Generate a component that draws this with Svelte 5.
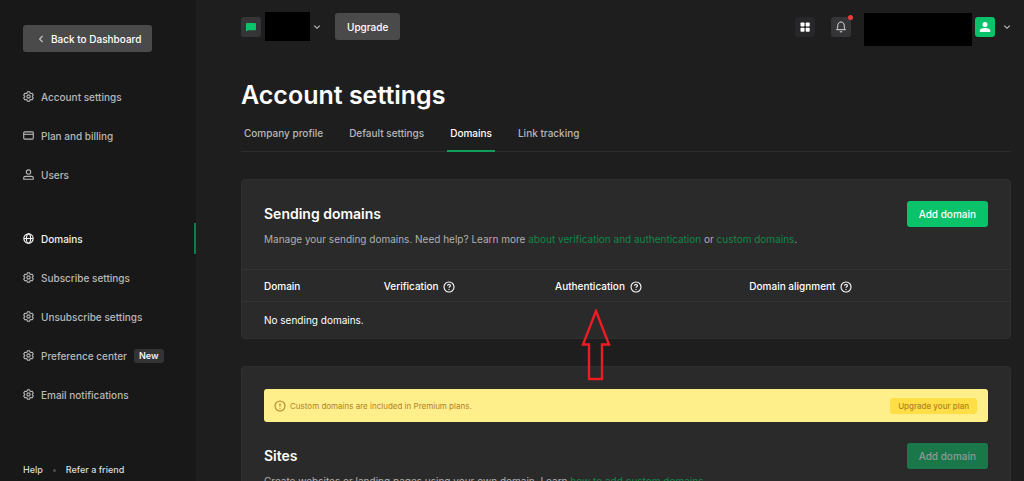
<script lang="ts">

    type NavItem = { label: string; icon: string; active?: boolean; badge?: string };

    const navGroups: NavItem[][] = [
        [
            { label: "Account settings", icon: "gear" },
            { label: "Plan and billing", icon: "card" },
            { label: "Users", icon: "user" },
        ],
        [
            { label: "Domains", icon: "globe", active: true },
            { label: "Subscribe settings", icon: "gear" },
            { label: "Unsubscribe settings", icon: "gear" },
            { label: "Preference center", icon: "gear", badge: "New" },
            { label: "Email notifications", icon: "gear" },
        ],
    ];

    const tabs = ["Company profile", "Default settings", "Domains", "Link tracking"];

    let activeTab = $state("Domains");

</script>

{#snippet chevron()}
    <svg class="chevron" viewBox="0 0 8 8" aria-hidden="true">
        <path d="M1.3 2.7 4 5.3l2.7-2.6" />
    </svg>
{/snippet}

{#snippet help()}
    <svg class="help" viewBox="0 0 12 12" aria-hidden="true">
        <circle cx="6" cy="6" r="5" />
        <path d="M4.6 4.8c0-1.8 2.8-1.8 2.8 0 0 1-1.4 1-1.4 2M6 8.1v.9" />
    </svg>
{/snippet}

{#snippet navIcon(name: string)}
    <svg class="nav-icon" viewBox="0 0 12 12" aria-hidden="true">
        {#if name === "gear"}
            <path d="M4.9.8h2.2l.5 1.4 1 .6 1.5-.3 1.1 1.9-1 1.1v1l1 1.1-1.1 1.9-1.5-.3-1 .6-.5 1.4H4.9l-.5-1.4-1-.6-1.5.3L.8 7.6l1-1.1v-1l-1-1.1 1.1-1.9 1.5.3 1-.6z" stroke-linejoin="round" />
            <circle cx="6" cy="6" r="1.8" />
        {:else if name === "card"}
            <rect x="0.8" y="2" width="10.4" height="8" rx="1" />
            <path d="M.8 4.7h10.4" />
        {:else if name === "user"}
            <circle cx="6" cy="3.3" r="2.4" />
            <path d="M.8 11.2V9.6c0-1 .7-1.6 1.6-1.6h7.2c.9 0 1.6.6 1.6 1.6v1.6z" />
        {:else}
            <circle cx="6" cy="6" r="5.1" />
            <ellipse cx="6" cy="6" rx="2.3" ry="5.1" />
            <path d="M1 6h10" />
        {/if}
    </svg>
{/snippet}

<div class="layout">
    <aside class="sidebar">
        <button class="button back" type="button">
            <svg class="chevron" viewBox="0 0 8 8" aria-hidden="true">
                <path d="M5.6 1 2.6 4l3 3" />
            </svg>
            Back to Dashboard
        </button>

        <nav class="nav" aria-label="Settings">
            {#each navGroups as group}
                <ul class="nav-group">
                    {#each group as item}
                        <li>
                            <a class="nav-item" class:active={item.active} href="#settings">
                                {@render navIcon(item.icon)}
                                {item.label}
                                {#if item.badge}
                                    <span class="badge">{item.badge}</span>
                                {/if}
                            </a>
                        </li>
                    {/each}
                </ul>
            {/each}
        </nav>

        <footer class="sidebar-footer">
            <a href="#help">Help</a>
            <span class="separator"></span>
            <a href="#refer">Refer a friend</a>
        </footer>
    </aside>

    <main class="main">
        <header class="topbar">
            <button class="switcher" type="button" aria-label="Switch account">
                <span class="tile">
                    <svg viewBox="0 0 12 12" aria-hidden="true">
                        <path d="M1.8 2h8.4c.4 0 .8.4.8.8v5.6c0 .4-.4.8-.8.8H3L1 10.6V2.8c0-.4.4-.8.8-.8z" fill="#09c269" />
                    </svg>
                </span>
                <span class="hidden-name"></span>
                {@render chevron()}
            </button>
            <button class="button upgrade" type="button">Upgrade</button>

            <div class="topbar-actions">
                <button class="tile dim" type="button" aria-label="Apps">
                    <svg viewBox="0 0 12 12" fill="#fff" aria-hidden="true">
                        <rect x="1.5" y="1.5" width="4" height="4" rx="0.8" />
                        <rect x="6.7" y="1.5" width="4" height="4" rx="0.8" />
                        <rect x="1.5" y="6.7" width="4" height="4" rx="0.8" />
                        <rect x="6.7" y="6.7" width="4" height="4" rx="0.8" />
                    </svg>
                </button>
                <button class="tile bell" type="button" aria-label="Notifications">
                    <svg viewBox="0 0 12 12" fill="none" stroke="#ddd" aria-hidden="true">
                        <path d="M1.5 8.7C2.5 8 2.8 7 2.8 4.5 2.8 2.5 4 1 6 1s3.2 1.5 3.2 3.5c0 2.5.3 3.5 1.3 4.2z" stroke-linejoin="round" />
                        <path d="M4.8 10.8h2.4" />
                    </svg>
                    <span class="dot"></span>
                </button>
                <button class="profile" type="button" aria-label="Profile">
                    <span class="hidden-profile"></span>
                    <span class="tile avatar">
                        <svg viewBox="0 0 12 12" fill="#fff" aria-hidden="true">
                            <circle cx="6" cy="3.5" r="2.5" />
                            <path d="M.8 11V9.5C.8 7.8 2.5 6.9 6 6.900s5.200.9 5.200 2.600V11z" />
                        </svg>
                    </span>
                    {@render chevron()}
                </button>
            </div>
        </header>

        <h1>Account settings</h1>

        <div class="tabs" role="tablist">
            {#each tabs as tab}
                <button
                    class="tab"
                    class:selected={tab === activeTab}
                    type="button"
                    role="tab"
                    aria-selected={tab === activeTab}
                    onclick={() => (activeTab = tab)}
                >
                    {tab}
                </button>
            {/each}
        </div>

        <section class="card">
            <div class="card-head">
                <div>
                    <h2>Sending domains</h2>
                    <p>
                        Manage your sending domains. Need help? Learn more
                        <a href="#authentication">about verification and authentication</a> or
                        <a href="#custom">custom domains</a>.
                    </p>
                </div>
                <button class="button primary" type="button">Add domain</button>
            </div>
            <table>
                <thead>
                    <tr>
                        <th class="col-domain">Domain</th>
                        <th class="col-verification">Verification {@render help()}</th>
                        <th class="col-authentication">
                            Authentication {@render help()}
                            <svg class="pointer" viewBox="0 0 30 72" aria-hidden="true">
                                <path d="M15 2 28 35.5H21V70H8V35.5H2z" />
                            </svg>
                        </th>
                        <th>Domain alignment {@render help()}</th>
                    </tr>
                </thead>
                <tbody>
                    <tr>
                        <td colspan="4">No sending domains.</td>
                    </tr>
                </tbody>
            </table>
        </section>

        <section class="card">
            <div class="notice">
                <svg class="help" viewBox="0 0 12 12" aria-hidden="true">
                    <circle cx="6" cy="6" r="5" />
                    <path d="M6 3.2v3.3M6 7.7v1.1" />
                </svg>
                <span>Custom domains are included in Premium plans.</span>
                <button class="notice-button" type="button">Upgrade your plan</button>
            </div>
            <div class="card-head">
                <div>
                    <h2>Sites</h2>
                    <p>
                        Create websites or landing pages using your own domain. Learn
                        <a href="#sites">how to add custom domains</a>.
                    </p>
                </div>
                <button class="button primary" type="button" disabled>Add domain</button>
            </div>
        </section>
    </main>
</div>

<style>
    :global(body) {
        background: #1e1e1e;
    }

    .layout {
        display: flex;
        height: 100vh;
        overflow: hidden;
        background: #1e1e1e;
        color: #fff;
        font-family: Inter, "Liberation Sans", sans-serif;
        font-size: 10px;
        line-height: 16px;
    }

    a {
        color: inherit;
        text-decoration: none;
    }

    button {
        padding: 0;
        border: 0;
        background: none;
        color: inherit;
        font: inherit;
        cursor: pointer;
    }

    .button {
        display: flex;
        align-items: center;
        justify-content: center;
        flex: 0 0 auto;
        height: 27px;
        padding: 0 12px;
        border-radius: 3px;
        background: #4a4a4b;
        font-weight: 500;
    }

    .chevron {
        width: 8px;
        height: 8px;
        fill: none;
        stroke: #c8c8c8;
        stroke-width: 1.1;
    }

    .sidebar {
        display: flex;
        flex: 0 0 196px;
        flex-direction: column;
        box-sizing: border-box;
        padding: 25px 0 3px;
        background: #181818;
    }

    .back {
        align-self: flex-start;
        gap: 6px;
        margin-left: 23px;
        padding: 0 11px 0 14px;
    }

    .nav {
        display: flex;
        flex-direction: column;
        gap: 33px;
        margin-top: 29px;
    }

    .nav-group {
        display: flex;
        flex-direction: column;
        gap: 8px;
        margin: 0;
        padding: 0;
        list-style: none;
    }

    .nav-item {
        display: flex;
        align-items: center;
        gap: 7px;
        height: 31px;
        padding-left: 23px;
        border-right: 2px solid transparent;
        color: #b8b8b8;
        font-weight: 500;
    }

    .nav-item.active {
        border-color: #0c7c48;
        color: #f2f2f2;
    }

    .nav-icon {
        width: 11px;
        height: 11px;
        fill: none;
        stroke: currentColor;
        stroke-width: 1.2;
    }

    .badge {
        padding: 0 5px;
        border-radius: 3px;
        background: #343436;
        color: #f2f2f2;
        font-size: 9px;
        line-height: 14px;
        font-weight: 600;
    }

    .sidebar-footer {
        display: flex;
        align-items: center;
        gap: 10px;
        margin-top: auto;
        padding-left: 23px;
        color: #dcdcdc;
        font-size: 9px;
        font-weight: 500;
    }

    .separator {
        width: 3px;
        height: 3px;
        border-radius: 50%;
        background: #4c4c4c;
    }

    .main {
        flex: 1 1 0;
        min-width: 0;
        padding: 12px 13px 0 45px;
    }

    .topbar {
        display: flex;
        align-items: center;
        height: 29px;
    }

    .switcher,
    .profile,
    .topbar-actions {
        display: flex;
        align-items: center;
    }

    .tile {
        position: relative;
        display: flex;
        align-items: center;
        justify-content: center;
        width: 20px;
        height: 20px;
        border-radius: 3px;
        background: #353537;
    }

    .tile svg {
        width: 12px;
        height: 12px;
    }

    .tile.dim {
        background: #272729;
    }

    .tile.avatar {
        margin: 0 8px 0 3px;
        background: #09c269;
    }

    .hidden-name {
        width: 45px;
        height: 29px;
        margin: 0 3px 0 4px;
        background: #000;
    }

    .upgrade {
        margin-left: 14px;
    }

    .topbar-actions {
        margin-left: auto;
    }

    .bell {
        margin: 0 13px 0 16px;
    }

    .dot {
        position: absolute;
        top: -2px;
        right: -2px;
        width: 5px;
        height: 5px;
        border-radius: 50%;
        background: #ee3c3c;
    }

    .hidden-profile {
        width: 108px;
        height: 33px;
        margin-top: 5px;
        background: #000;
    }

    h1 {
        margin: 38px 0 0;
        font-size: 25px;
        line-height: 32px;
        font-weight: 600;
    }

    .tabs {
        display: flex;
        gap: 20px;
        margin-top: 12px;
        border-bottom: 1px solid #2c2c2c;
    }

    .tab {
        height: 29px;
        margin-bottom: -1px;
        padding: 0 3px 8px;
        border-bottom: 2px solid transparent;
        color: #b8b8b8;
        font-weight: 500;
    }

    .tab.selected {
        border-color: #0f9d5a;
        color: #fff;
    }

    .card {
        margin-top: 27px;
        border: 1px solid #2f2f2f;
        border-radius: 4px;
        background: #2a2a2a;
    }

    .card-head {
        display: flex;
        align-items: flex-start;
        justify-content: space-between;
        padding: 21px 22px 22px;
    }

    h2 {
        margin: 0;
        font-size: 14px;
        line-height: 26px;
        font-weight: 600;
    }

    p {
        margin: 4px 0 0;
        color: #b0b0b0;
    }

    p a {
        color: #128649;
    }

    .primary {
        height: 26px;
        background: #09c269;
    }

    .primary:disabled {
        background: #19774a;
        color: #8f9a94;
    }

    table {
        width: 100%;
        border-collapse: collapse;
        table-layout: fixed;
    }

    th,
    td {
        height: 31px;
        padding: 0;
        border-top: 1px solid #333;
        font-weight: 500;
        text-align: left;
    }

    td {
        height: 36px;
        font-weight: 400;
    }

    th {
        position: relative;
    }

    th:first-child,
    td:first-child {
        padding-left: 22px;
    }

    .col-domain {
        width: 15.6%;
    }

    .col-verification {
        width: 22.3%;
    }

    .col-authentication {
        width: 25.3%;
    }

    .help {
        width: 12px;
        height: 12px;
        margin-left: 2px;
        fill: none;
        stroke: currentColor;
        stroke-width: 1.1;
        vertical-align: -3px;
    }

    .pointer {
        position: absolute;
        top: 39px;
        left: 26px;
        width: 30px;
        height: 72px;
        fill: none;
        stroke: #ed1c24;
        stroke-width: 2.4;
    }

    .notice {
        display: flex;
        align-items: center;
        gap: 4px;
        height: 33px;
        margin: 22px 22px 0;
        padding: 0 11px 0 8px;
        border-radius: 3px;
        background: #ffef8b;
        color: #b08228;
        font-size: 8px;
    }

    .notice-button {
        height: 16px;
        margin-left: auto;
        padding: 0 8px;
        border-radius: 3px;
        background: #ffdf45;
        font-weight: 500;
    }
</style>
